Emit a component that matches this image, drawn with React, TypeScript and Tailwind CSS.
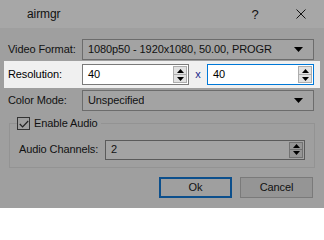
import React from "react";

function Arrow({ up }: { up?: boolean }) {
  return (
    <svg width="7" height="4" viewBox="0 0 7 4" className="block">
      {up ? <polygon points="0,4 7,4 3.5,0" fill="#000" /> : <polygon points="0,0 7,0 3.5,4" fill="#000" />}
    </svg>
  );
}

function Spinner({ light }: { light?: boolean }) {
  const half = light
    ? "flex flex-1 items-center justify-center border border-[#adadad] bg-[#e1e1e1]"
    : "flex flex-1 items-center justify-center border border-[#727272] bg-[#959595]";
  return (
    <div className="flex h-full w-[14px] flex-col py-px">
      <div className={half}>
        <Arrow up />
      </div>
      <div className={half + " -mt-px"}>
        <Arrow />
      </div>
    </div>
  );
}

function Combo({ value }: { value: string }) {
  return (
    <div className="flex h-[21px] min-w-0 flex-1 items-center justify-between border border-[#6c6c6c] bg-[#a3a3a3] pl-[5px] pr-[10px]">
      <span className="overflow-hidden">{value}</span>
      <svg width="9" height="5" viewBox="0 0 9 5" className="shrink-0">
        <polygon points="0,0 9,0 4.5,5" fill="#000" />
      </svg>
    </div>
  );
}

export default function App() {
  return (
    <div
      className="flex h-[208px] w-[324px] flex-col overflow-hidden whitespace-nowrap bg-[#9f9f9f] text-[11px] leading-none text-[#111]"
      style={{ fontFamily: '"Segoe UI", "Liberation Sans", Arial, sans-serif', letterSpacing: "-0.1px" }}
    >
      {/* title bar */}
      <div className="flex h-[28px] shrink-0 items-center bg-[#a7a7a7] pl-[27px] text-[12px]">
        <span className="flex-1">airmgr</span>
        <span className="w-[46px] text-center text-[13px]">?</span>
        <span className="flex w-[46px] items-center justify-center">
          <svg width="10" height="10" viewBox="0 0 10 10">
            <path d="M0.5 0.5 L9.5 9.5 M9.5 0.5 L0.5 9.5" stroke="#111" strokeWidth="1" />
          </svg>
        </span>
      </div>

      <div className="flex flex-col pt-[11px]">
        <div className="flex h-[21px] items-center pl-[8px] pr-[10px]">
          <span className="w-[74px] shrink-0">Video Format:</span>
          <Combo value="1080p50 - 1920x1080, 50.00, PROGR" />
        </div>

        {/* highlighted row */}
        <div className="mx-[4px] mt-[1px] flex h-[27px] w-[316px] items-center bg-[#f0f0f0] pl-[4px] pr-[6px] text-black">
          <span className="w-[74px] shrink-0">Resolution:</span>
          <div className="flex h-[21px] w-[107px] items-center border border-[#7a7a7a] bg-white pl-[5px] pr-px">
            <span className="flex-1">40</span>
            <Spinner light />
          </div>
          <span className="w-[18px] text-center text-[#1b2a8a]">x</span>
          <div className="flex h-[21px] flex-1 items-center border border-[#0078d7] bg-white pl-[5px] pr-px">
            <span className="flex-1">40</span>
            <Spinner light />
          </div>
        </div>

        <div className="mt-[2px] flex h-[21px] items-center pl-[8px] pr-[10px]">
          <span className="w-[74px] shrink-0">Color Mode:</span>
          <Combo value="Unspecified" />
        </div>

        {/* group box */}
        <div className="relative mx-[9px] mt-[12px] h-[45px] border border-[#939393]">
          <div className="absolute -top-[7px] left-[7px] flex items-center bg-[#9f9f9f] pr-[3px]">
            <div className="flex h-[13px] w-[13px] items-center justify-center border border-[#333]">
              <svg width="10" height="8" viewBox="0 0 10 8">
                <path d="M0.8 4 L3.6 6.8 L9.2 1" stroke="#222" strokeWidth="1.2" fill="none" />
              </svg>
            </div>
            <span className="ml-[4px]">Enable Audio</span>
          </div>
          <div className="flex h-full items-center pl-[9px] pr-[9px] pt-[8px]">
            <span className="w-[86px] shrink-0">Audio Channels:</span>
            <div className="flex h-[20px] flex-1 items-center border border-[#5a5a5a] bg-[#a3a3a3] pl-[5px] pr-px">
              <span className="flex-1">2</span>
              <Spinner />
            </div>
          </div>
        </div>

        {/* buttons */}
        <div className="mt-[9px] flex justify-end gap-[8px] pr-[11px]">
          <div className="flex h-[21px] w-[73px] items-center justify-center border-2 border-[#0c4f8c]">Ok</div>
          <div className="flex h-[21px] w-[73px] items-center justify-center border border-[#7a7a7a] bg-[#959595]">Cancel</div>
        </div>
      </div>
    </div>
  );
}
